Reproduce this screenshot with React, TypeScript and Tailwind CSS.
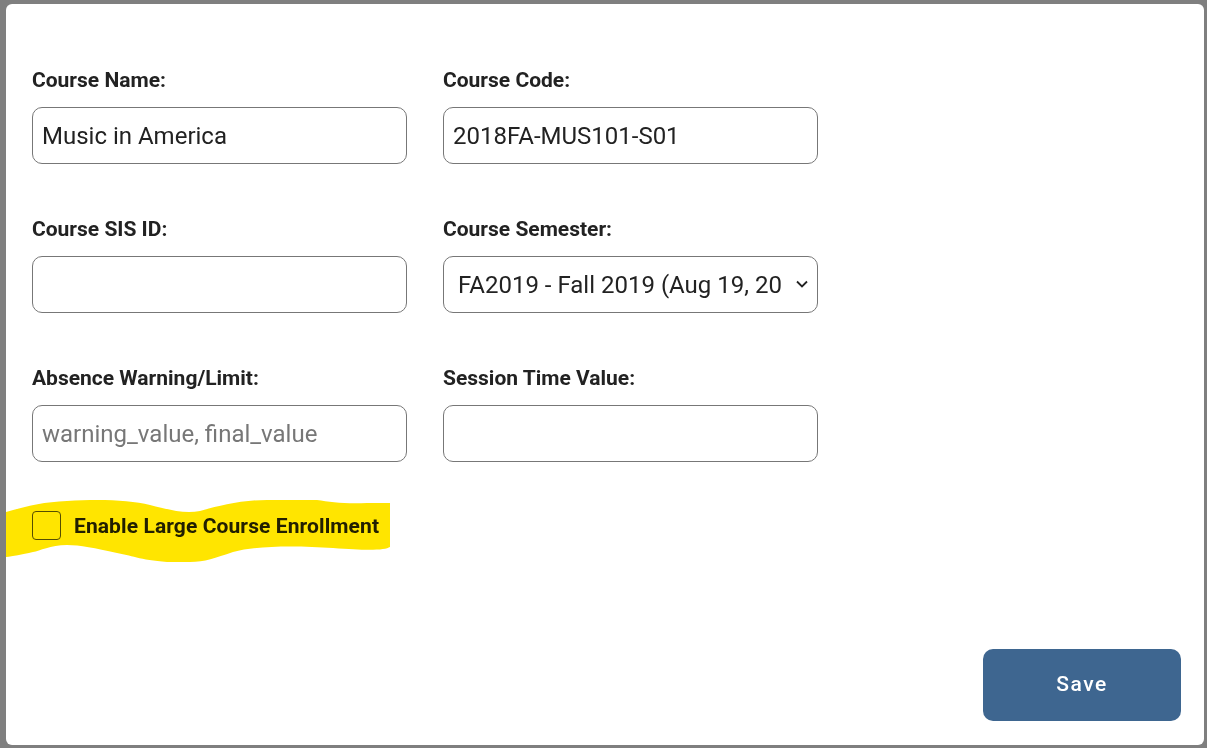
import React from 'react';

interface Field {
  label: string;
  value?: string;
  placeholder?: string;
  kind?: 'input' | 'select';
}

const fields: Field[] = [
  { label: 'Course Name:', value: 'Music in America' },
  { label: 'Course Code:', value: '2018FA-MUS101-S01' },
  { label: 'Course SIS ID:', value: '' },
  { label: 'Course Semester:', value: 'FA2019 - Fall 2019 (Aug 19, 2019 - Dec 13, 2019)', kind: 'select' },
  { label: 'Absence Warning/Limit:', placeholder: 'warning_value, final_value' },
  { label: 'Session Time Value:', value: '' },
];

const font = { fontFamily: 'Roboto, "Noto Sans", sans-serif' };

const Highlight: React.FC = () => (
  <svg
    className="absolute left-0 top-0 pointer-events-none mix-blend-multiply"
    width={1198}
    height={741}
    viewBox="6 4 1198 741"
  >
    <path
      fill="#ffe500"
      d="M3 513 C 20 508, 40 502, 67 501 C 100 499, 130 500, 150 505 C 170 510, 185 514, 200 511 C 215 507, 240 500, 267 500 L 317 500 C 330 502, 345 504, 367 503 L 390 503 L 390 547 C 385 550, 370 551, 333 548 C 300 546, 260 545, 233 552 C 215 558, 205 562, 190 562 L 167 562 C 140 560, 130 555, 117 553 C 95 548, 80 545, 67 545 C 50 545, 40 551, 33 552 C 20 555, 10 557, 3 557 Z"
    />
  </svg>
);

const App: React.FC = () => {
  return (
    <div className="w-[1207px] h-[748px] bg-[#7f7f7f] pl-[6px] pt-[4px] overflow-hidden" style={font}>
      <div className="relative w-[1198px] h-[741px] bg-white rounded-[6px] flex flex-col">
        <div className="pl-[26px] pt-[64px]">
          <div className="grid grid-cols-[375px_375px] gap-x-[36px] gap-y-[53px]">
            {fields.map((f) => (
              <div key={f.label}>
                <label className="block text-[21px] leading-[24px] font-bold text-[#222] mb-[15px]">
                  {f.label}
                </label>
                {f.kind === 'select' ? (
                  <div className="relative">
                    <select
                      defaultValue={f.value}
                      className="w-full h-[57px] appearance-none border border-[#777] rounded-[10px] pl-[14px] pr-[36px] text-[24px] text-[#222] bg-white outline-none"
                    >
                      <option>{f.value}</option>
                    </select>
                    <svg
                      className="absolute right-[10px] top-[24px] pointer-events-none"
                      width="12"
                      height="8"
                      viewBox="0 0 12 8"
                      fill="none"
                      stroke="#222"
                      strokeWidth="1.8"
                    >
                      <path d="M1 1.5 L6 6.5 L11 1.5" />
                    </svg>
                  </div>
                ) : (
                  <input
                    defaultValue={f.value}
                    placeholder={f.placeholder}
                    className="w-full h-[57px] border border-[#777] rounded-[10px] px-[9px] text-[24px] text-[#222] placeholder:text-[#777] outline-none"
                  />
                )}
              </div>
            ))}
          </div>

          <div className="flex items-center mt-[49px]">
            <span className="w-[29px] h-[29px] border-[1.5px] border-[#555] rounded-[4px] bg-white" />
            <span className="ml-[13px] text-[21px] leading-[24px] font-bold text-[#222] tracking-[0.1px]">Enable Large Course Enrollment</span>
          </div>
        </div>

        <div className="mt-auto flex justify-end pr-[23px] pb-[24px]">
          <button className="w-[198px] h-[72px] rounded-[10px] bg-[#3e6690] text-white text-[21px] font-medium tracking-[1.5px]">
            Save
          </button>
        </div>

        <Highlight />
      </div>
    </div>
  );
};

export default App;
